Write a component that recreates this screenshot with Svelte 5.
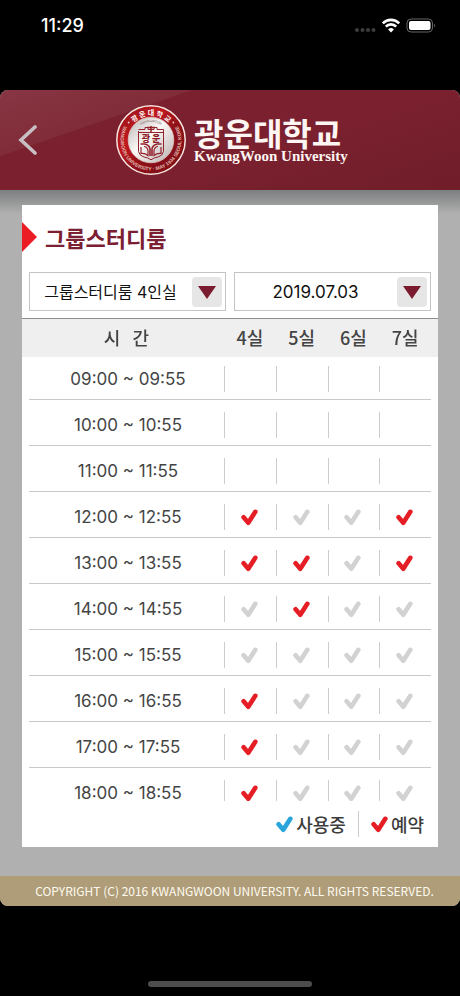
<script lang="ts">
	type State = '' | 'free' | 'booked' | 'used';

	let room = '그룹스터디룸 4인실';
	let date = '2019.07.03';

	const rooms = ['4실', '5실', '6실', '7실'];
	const labels = { free: '가능', booked: '예약', used: '사용중' };

	// one letter per room: r = booked, f = free, - = past
	const codes = ['----', '----', '----', 'rffr', 'rrfr', 'frff', 'ffff', 'rfff', 'rfff', 'rfff'];
	const states: Record<string, State> = { r: 'booked', f: 'free', '-': '' };

	const slots = codes.map((code, i) => {
		const hour = String(9 + i).padStart(2, '0');
		return { time: `${hour}:00 ~ ${hour}:55`, cells: [...code].map((c) => states[c]) };
	});
</script>

{#snippet check(state)}
	<svg class="check {state}" viewBox="0 0 17 17" role="img" aria-label={labels[state]}>
		<path d="M2.6 8.2 7.3 13.8 14.3 2.8" />
	</svg>
{/snippet}

<div class="phone">
	<div class="status">
		<span class="clock">11:29</span>
		<svg width="84" height="18" viewBox="0 0 84 18" aria-hidden="true">
			<g fill="#3c3c3c">
				<circle cx="4" cy="13" r="2" />
				<circle cx="9.5" cy="13" r="2" />
				<circle cx="15" cy="13" r="2" />
				<circle cx="20.5" cy="13" r="2" />
			</g>
			<g fill="none" stroke="#fff" stroke-width="2.6">
				<path d="M29.8 6.3a11.5 11.5 0 0 1 16.4 0" />
				<path d="M32.8 9.6a7.2 7.2 0 0 1 10.4 0" />
			</g>
			<path d="M38 15.5l-2.9-3a4.2 4.2 0 0 1 5.8 0z" fill="#fff" />
			<rect x="54" y="2" width="25.5" height="13" rx="4" fill="none" stroke="#666" />
			<rect x="56" y="4" width="21.5" height="9" rx="2" fill="#fff" />
			<path d="M81 6.5q2 2 0 4z" fill="#666" />
		</svg>
	</div>

	<div class="app">
		<header>
			<button class="back" aria-label="뒤로">
				<svg width="20" height="32" viewBox="0 0 20 32">
					<path d="M18 3 4 16 18 29" fill="none" stroke="#c8bfc4" stroke-width="3.6" stroke-linecap="round" />
				</svg>
			</button>
			<div class="brand">
				<svg class="seal" viewBox="0 0 70 70" aria-hidden="true">
					<defs>
						<linearGradient id="ring" x1="0" y1="0" x2="1" y2="1">
							<stop offset="0" stop-color="#8f1018" />
							<stop offset="0.35" stop-color="#c01a20" />
							<stop offset="0.6" stop-color="#8c1018" />
							<stop offset="1" stop-color="#7d0f18" />
						</linearGradient>
						<linearGradient id="plate" x1="0" y1="0" x2="1" y2="1">
							<stop offset="0" stop-color="#b9b4b4" />
							<stop offset="0.45" stop-color="#fbf8f6" />
							<stop offset="1" stop-color="#b5adad" />
						</linearGradient>
						<path id="top" d="M10.5 35a24.5 24.5 0 0 1 49 0" />
						<path id="bottom" d="M8.5 20A30.5 30.5 0 1 0 61.5 20" />
						<path id="inner" d="M17 35a18 18 0 0 1 36 0" />
					</defs>
					<circle cx="35" cy="35" r="34.2" fill="url(#ring)" stroke="#f4e5df" stroke-width="1.5" />
					<circle cx="35" cy="35" r="22.8" fill="url(#plate)" stroke="#dfc3bf" stroke-width="0.8" />
					<text class="ring-ko"><textPath href="#top" startOffset="50%" text-anchor="middle">광 운 대 학 교</textPath></text>
					<text class="ring-en"><textPath href="#bottom" startOffset="50%" text-anchor="middle">KWANGWOON UNIVERSITY · MAY 1934 SEOUL KOREA</textPath></text>
					<circle cx="12.6" cy="17.5" r="0.9" fill="#e9cfca" />
					<circle cx="57.4" cy="17.5" r="0.9" fill="#e9cfca" />
					<text class="motto"><textPath href="#inner" startOffset="50%" text-anchor="middle">KWANGWOON</textPath></text>
					<g fill="none" stroke="#94232c">
						<path d="M22.5 26v20.5q1 4.500 5.500 5.500 4 .5 7 2.800 3-2.300 7-2.800 4.500-1 5.500-5.500V26" />
						<path d="M22.5 27.500h25M22.500 24.500h6.500v-2h3v2h6v-2h3v2h6.500v3" />
						<path d="M31 22.500h8M35 21v6" stroke-width="1.5" />
						<path d="M24.500 39h4q5 1 5.500 5v7M45.500 39h-4q-5 1-5.500 5v7" stroke-width="1.6" />
						<path d="M25 42v6.500q4-.5 7 2v-5q-1-4-4-4M45 42v6.500q-4-.5-7 2v-5q1-4 4-4" stroke-width="1.2" />
					</g>
					<text class="crest" x="35" y="37" text-anchor="middle">광 운</text>
				</svg>
				<div class="names">
					<span class="ko">광운대학교</span>
					<span class="en">KwangWoon University</span>
				</div>
			</div>
		</header>

		<main>
			<section class="card">
				<h1>그룹스터디룸</h1>

				<div class="filters">
					<label class="picker">
						<select bind:value={room} aria-label="시설">
							<option>그룹스터디룸 4인실</option>
						</select>
						<span class="arrow"></span>
					</label>
					<label class="picker">
						<select class="date" bind:value={date} aria-label="날짜">
							<option>2019.07.03</option>
						</select>
						<span class="arrow"></span>
					</label>
				</div>

				<div class="scroll">
					<table>
						<thead>
							<tr>
								<th class="time" scope="col">시&nbsp;&nbsp; 간</th>
								{#each rooms as name}
									<th scope="col">{name}</th>
								{/each}
							</tr>
						</thead>
						<tbody>
							{#each slots as slot}
								<tr>
									<td class="time">{slot.time}</td>
									{#each slot.cells as state}
										<td>
											<div class="cell">
												{#if state}
													{@render check(state)}
												{/if}
											</div>
										</td>
									{/each}
								</tr>
							{/each}
						</tbody>
					</table>
				</div>

				<ul class="legend">
					<li>{@render check('used')}사용중</li>
					<li>{@render check('booked')}예약</li>
				</ul>
			</section>
		</main>

		<footer>COPYRIGHT (C) 2016 KWANGWOON UNIVERSITY. ALL RIGHTS RESERVED.</footer>
	</div>

	<div class="home"></div>
</div>

<style>
	:global(body) {
		margin: 0;
		background: #000;
	}

	.phone {
		display: flex;
		flex-direction: column;
		height: 100vh;
		background: #000;
		font-family: 'Noto Sans CJK KR', sans-serif;
	}

	.status {
		display: flex;
		justify-content: space-between;
		align-items: center;
		box-sizing: border-box;
		height: 90px;
		padding: 0 23px 38px 41px;
	}

	.clock {
		color: #fff;
		font: 500 18px/24px Inter, sans-serif;
	}

	.app {
		flex: 1;
		min-height: 0;
		display: flex;
		flex-direction: column;
		border-radius: 8px;
		overflow: hidden;
		background: #b0b0b0;
	}

	header {
		display: flex;
		align-items: center;
		height: 100px;
		background: linear-gradient(161deg, #873643 0, #812c39 62px, #7b202e 63px, #7a202e 60%, #701e2a);
	}

	.back {
		display: flex;
		margin-left: 17px;
		padding: 0;
		border: 0;
		background: none;
	}

	.brand {
		display: flex;
		align-items: center;
		gap: 8px;
		margin-left: 79px;
	}

	.seal {
		width: 70px;
		height: 70px;
	}

	.ring-ko {
		font: 700 7px 'Noto Sans CJK KR', sans-serif;
		fill: #fff;
	}

	.ring-en {
		font: 700 5px 'Liberation Sans', sans-serif;
		fill: #e0b5ad;
	}

	.motto {
		font: 3px 'Liberation Sans', sans-serif;
		fill: #7c5557;
	}

	.crest {
		font: 900 9px 'Noto Sans CJK KR', sans-serif;
		fill: #8c1822;
	}

	.names {
		display: flex;
		flex-direction: column;
		color: #fdf6f2;
		white-space: nowrap;
	}

	.ko {
		font-size: 32px;
		font-weight: 700;
		line-height: 32px;
	}

	.en {
		font: 700 15px/16px 'Liberation Serif', serif;
	}

	main {
		flex: 1;
		min-height: 0;
		display: flex;
		padding: 15px 22px 29px;
		background: linear-gradient(#7c7f80, #b0b0b0 24px);
	}

	.card {
		flex: 1;
		min-width: 0;
		display: flex;
		flex-direction: column;
		background: #fff;
	}

	h1 {
		display: flex;
		align-items: center;
		gap: 8px;
		margin: 0;
		height: 63px;
		padding-bottom: 4px;
		color: #7b2032;
		font-size: 22px;
		font-weight: 700;
		line-height: 32px;
	}

	h1::before {
		content: '';
		border: solid transparent;
		border-width: 15px 0 15px 15px;
		border-left-color: #ec1c24;
	}

	.filters {
		display: grid;
		grid-template-columns: 1fr 1fr;
		gap: 8px;
		padding: 0 7px 7px;
	}

	.picker {
		display: flex;
		position: relative;
	}

	select {
		appearance: none;
		box-sizing: border-box;
		width: 100%;
		height: 39px;
		margin: 0;
		padding: 0 34px 0 0;
		border: 1px solid #c4c4c4;
		border-radius: 0;
		background: #fff;
		color: #111;
		font: 16px Inter, 'Noto Sans CJK KR', sans-serif;
		text-align: center;
		text-align-last: center;
	}

	.date {
		font-size: 17px;
	}

	.arrow {
		position: absolute;
		top: 5px;
		right: 4px;
		display: grid;
		place-items: center;
		width: 30px;
		height: 30px;
		border-radius: 4px;
		background: #e6e6e6;
		pointer-events: none;
	}

	.arrow::before {
		content: '';
		border: solid transparent;
		border-width: 13px 9px 0;
		border-top-color: #7b1b30;
	}

	.scroll {
		flex: 1;
		min-height: 0;
		overflow: hidden auto;
		scrollbar-width: none;
		border-top: 1px solid #8c8c8c;
	}

	table {
		width: calc(100% - 14px);
		margin: 0 7px;
		table-layout: fixed;
		border-collapse: separate;
		border-spacing: 0;
	}

	th {
		position: sticky;
		top: 0;
		box-sizing: border-box;
		height: 38px;
		padding: 0 0 2px;
		background: #efefef;
		color: #444;
		font-size: 18px;
		font-weight: 500;
		line-height: 24px;
	}

	th:first-child {
		box-shadow: -7px 0 #efefef;
	}

	th:last-child {
		box-shadow: 7px 0 #efefef;
	}

	.time {
		width: 195px;
		text-align: center;
	}

	td {
		box-sizing: border-box;
		height: 46px;
		padding: 5px 0 0;
		border-bottom: 1px solid #c9c9c9;
		color: #444;
		font: 17px/24px Inter, sans-serif;
	}

	td.time {
		padding-left: 3px;
	}

	tr:first-child td {
		height: 43px;
		padding-top: 2px;
	}

	.cell {
		display: flex;
		align-items: center;
		justify-content: center;
		box-sizing: border-box;
		height: 26px;
		padding-right: 2px;
		border-left: 1px solid #ccc;
	}

	.check {
		width: 17px;
		height: 17px;
		fill: none;
		stroke: #d2d2d2;
		stroke-width: 4.6;
		stroke-linecap: round;
		stroke-linejoin: round;
	}

	.booked {
		stroke: #e51d25;
	}

	.used {
		stroke: #29a5dc;
	}

	.legend {
		display: flex;
		justify-content: flex-end;
		margin: 0;
		padding: 10px 14px 10px 0;
		list-style: none;
	}

	.legend li {
		display: flex;
		align-items: center;
		gap: 3px;
		color: #3c3c3c;
		font-size: 18px;
		font-weight: 500;
		line-height: 26px;
	}

	.legend li + li {
		margin-left: 12px;
		padding-left: 12px;
		border-left: 1px solid #ccc;
	}

	footer {
		height: 30px;
		background: #ae9d78;
		color: #fffaf0;
		font-size: 12px;
		line-height: 30px;
		padding-left: 9px;
		text-align: center;
		white-space: nowrap;
	}

	.home {
		width: 164px;
		height: 6px;
		margin: 75px auto 9px;
		border-radius: 3px;
		background: #4d4d4d;
	}
</style>
